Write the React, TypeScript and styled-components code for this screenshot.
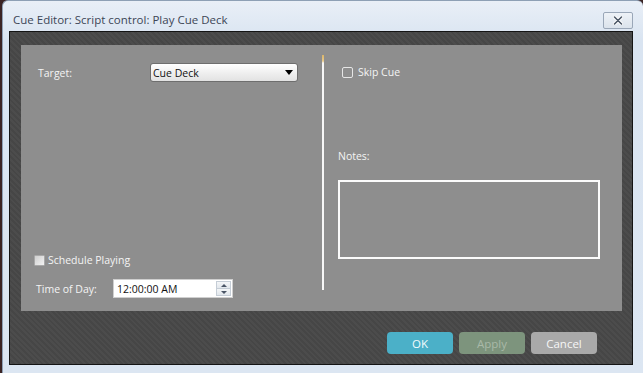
import styled, { createGlobalStyle } from "styled-components";

const Global = createGlobalStyle`
body {
  margin: 0;
  background: #3b2424;
  font-family: "Segoe UI", "Open Sans", "DejaVu Sans", sans-serif;
}
`;

const Window = styled.div`
margin-left: 2px;
width: 641px;
height: 373px;
background: linear-gradient(#e9eff7, #d9e4f1 40px, #dce6f2);
border-top-left-radius: 6px;
border-top-right-radius: 6px;
border: 1px solid #8ea0b5;
border-bottom: none;
border-right: none;
box-sizing: border-box;
display: flex;
flex-direction: column;
`;

const TitleBar = styled.div`
height: 30px;
display: flex;
align-items: center;
justify-content: space-between;
padding: 0 10px 0 10px;
`;

const Title = styled.span`
font-family: "Open Sans", "Noto Sans", sans-serif;
font-size: 11.5px;
color: #3c4656;
margin-top: 6px;
`;

const CloseBtn = styled.div`
width: 28px;
height: 15px;
margin-top: 8px;
border: 1px solid #9aa7b8;
border-radius: 2px;
background: linear-gradient(#eef2f7, #dbe3ec);
display: flex;
align-items: center;
justify-content: center;
`;

const Body = styled.div`
margin: 0 8px 0 6px;
width: 624px;
height: 334px;
box-sizing: border-box;
border: 1px solid #141414;
background: repeating-linear-gradient(45deg, #4c4c4c 0 2px, #464646 2px 4px);
padding: 13px 10px 0 11px;
display: flex;
flex-direction: column;
`;

const Panel = styled.div`
width: 601px;
height: 266px;
background: #8e8e8e;
display: flex;
`;

const LeftCol = styled.div`
width: 301px;
display: flex;
flex-direction: column;
justify-content: space-between;
padding: 18px 0 13px 0;
box-sizing: border-box;
`;

const Row = styled.div<{ $indent?: number }>`
display: flex;
align-items: center;
padding-left: ${p => p.$indent ?? 0}px;
`;

const Label = styled.span<{ $width?: number }>`
font-family: "Open Sans", "Noto Sans", sans-serif;
font-size: 10.5px;
color: #f4f4f4;
width: ${p => (p.$width ? `${p.$width}px` : "auto")};
`;

const Select = styled.div`
width: 148px;
height: 19px;
box-sizing: border-box;
border: 1px solid #6e6e6e;
border-radius: 3px;
background: linear-gradient(#ffffff, #f0f0f0 50%, #e2e2e2);
display: flex;
align-items: center;
justify-content: space-between;
padding: 0 4px 0 2px;
font-family: "Open Sans", "Noto Sans", sans-serif;
font-size: 10.5px;
color: #111;
`;

const Arrow = styled.span`
width: 0;
height: 0;
border-left: 4px solid transparent;
border-right: 4px solid transparent;
border-top: 5px solid #000;
`;

const Bottom = styled.div`
display: flex;
flex-direction: column;
gap: 12px;
`;

const Box = styled.span<{ $filled?: boolean }>`
width: 11px;
height: 11px;
box-sizing: border-box;
border-radius: ${p => (p.$filled ? "1px" : "2px")};
border: 1px solid ${p => (p.$filled ? "#a8a8a8" : "#e6e6e6")};
background: ${p => (p.$filled ? "linear-gradient(135deg, #cfcfcf, #f2f2f2)" : "transparent")};
margin-right: ${p => (p.$filled ? "3px" : "5px")};
`;

const TimeInput = styled.div`
width: 120px;
height: 19px;
box-sizing: border-box;
background: #fff;
border: 1px solid #cfcfcf;
display: flex;
align-items: center;
justify-content: space-between;
padding: 0 1px 0 3px;
font-family: "Open Sans", "Noto Sans", sans-serif;
font-size: 10.5px;
color: #111;
`;

const Spin = styled.div`
width: 15px;
height: 15px;
display: flex;
flex-direction: column;
border: 1px solid #c5cdd6;
box-sizing: border-box;
`;

const SpinHalf = styled.div<{ $down?: boolean }>`
flex: 1;
display: flex;
align-items: center;
justify-content: center;
background: linear-gradient(#f4f6f8, #e2e7ec);
border-top: ${p => (p.$down ? "1px solid #c5cdd6" : "none")};
&::after {
  content: "";
  border-left: 3px solid transparent;
  border-right: 3px solid transparent;
  ${p => (p.$down ? "border-top: 3px solid #4a5566;" : "border-bottom: 3px solid #4a5566;")}
}
`;

const Divider = styled.div`
width: 2px;
margin: 10px 0 21px 0;
background: linear-gradient(#d9b46a 0, #e8c98a 6px, #f7f7f7 8px, #f7f7f7);
`;

const RightCol = styled.div`
flex: 1;
display: flex;
flex-direction: column;
padding: 20px 0 0 14px;
`;

const Notes = styled.div`
margin-top: 64px;
`;

const NotesBox = styled.div`
margin-top: 15px;
width: 262px;
height: 79px;
box-sizing: border-box;
border: 2px solid #fbfbfb;
`;

const Footer = styled.div`
display: flex;
justify-content: flex-end;
gap: 6px;
padding: 21px 25px 0 0;
`;

const Button = styled.div<{ $bg: string; $color: string }>`
width: 66px;
height: 22px;
border-radius: 4px;
background: ${p => p.$bg};
color: ${p => p.$color};
display: flex;
align-items: center;
justify-content: center;
font-family: "Open Sans", "Noto Sans", sans-serif;
font-size: 11.5px;
`;

export default function App() {
  return (
    <>
      <Global />
      <Window>
        <TitleBar>
          <Title>Cue Editor: Script control: Play Cue Deck</Title>
          <CloseBtn>
            <svg width="10" height="9" viewBox="0 0 10 9">
              <path d="M1.5 1 L8.5 8 M8.5 1 L1.5 8" stroke="#fff" strokeWidth="3.4" strokeLinecap="round" />
              <path d="M1.5 1 L8.5 8 M8.5 1 L1.5 8" stroke="#4d5868" strokeWidth="1.6" strokeLinecap="round" />
            </svg>
          </CloseBtn>
        </TitleBar>
        <Body>
          <Panel>
            <LeftCol>
              <Row $indent={17}>
                <Label $width={112}>Target:</Label>
                <Select>
                  Cue Deck
                  <Arrow />
                </Select>
              </Row>
              <Bottom>
                <Row $indent={13}>
                  <Box $filled />
                  <Label>Schedule Playing</Label>
                </Row>
                <Row $indent={15}>
                  <Label $width={77}>Time of Day:</Label>
                  <TimeInput>
                    12:00:00 AM
                    <Spin>
                      <SpinHalf />
                      <SpinHalf $down />
                    </Spin>
                  </TimeInput>
                </Row>
              </Bottom>
            </LeftCol>
            <Divider />
            <RightCol>
              <Row $indent={4}>
                <Box />
                <Label>Skip Cue</Label>
              </Row>
              <Notes>
                <Label>Notes:</Label>
                <NotesBox />
              </Notes>
            </RightCol>
          </Panel>
          <Footer>
            <Button $bg="#4bb0c8" $color="#f4fbfd">OK</Button>
            <Button $bg="#7d947d" $color="#a9b9a8">Apply</Button>
            <Button $bg="#a9a9a9" $color="#f6f6f6">Cancel</Button>
          </Footer>
        </Body>
      </Window>
    </>
  );
}
